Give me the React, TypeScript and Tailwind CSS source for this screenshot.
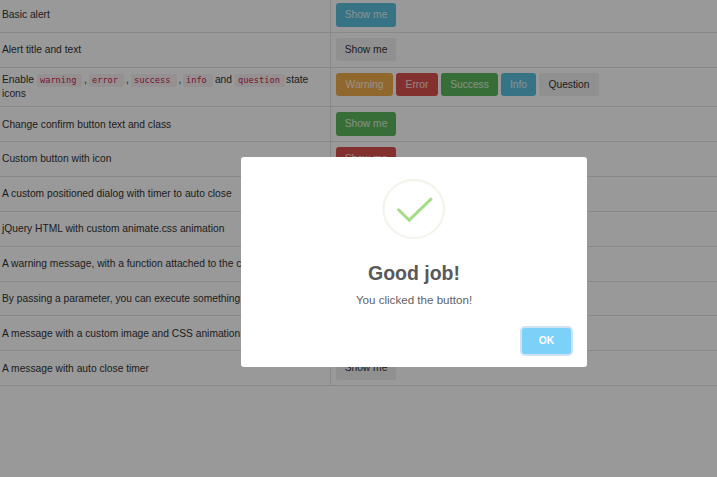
import type { ReactNode } from 'react';
import clsx from 'clsx';

const variants = {
  default: 'bg-[#f0f0f0] text-[#333]',
  info: 'bg-[#5bc0de] text-white/80',
  warning: 'bg-[#f0ad4e] text-white/80',
  danger: 'bg-[#d9534f] text-white/80',
  success: 'bg-[#5cb85c] text-white/80',
};

type ButtonProps = { variant?: keyof typeof variants; className?: string; children: ReactNode };

function Button({ variant = 'default', className = 'w-[60px]', children }: ButtonProps) {
  return (
    <button className={clsx('h-[23.5px] shrink-0 rounded-[3px] pt-[0.5px] text-center', variants[variant], className)}>
      {children}
    </button>
  );
}

function Code({ className, children }: { className: string; children: ReactNode }) {
  return (
    <code
      className={clsx(
        'inline-block h-[13px] rounded-[2px] bg-[#f9f2f4] pl-[3px] font-["DejaVu_Sans_Mono",monospace] text-[8.7px] leading-[13px] text-[#c7254e]',
        className,
      )}
    >
      {children}
    </code>
  );
}

type RowProps = { label: ReactNode; height?: string; children: ReactNode };

function Row({ label, height = 'h-[34.9px]', children }: RowProps) {
  return (
    <div className={clsx('flex border-b border-[#e4e4e4]', height)}>
      <div className="flex w-[331px] shrink-0 items-center border-r border-[#e4e4e4] pt-px pl-[2px] whitespace-nowrap">
        {label}
      </div>
      <div className="flex items-start gap-[3px] pt-[5px] pl-[5px]">{children}</div>
    </div>
  );
}

function SuccessIcon() {
  return (
    <svg className="h-[64px] w-[66px]" viewBox="0 0 66 64" fill="none">
      <ellipse cx="32.8" cy="32" rx="30.3" ry="29" stroke="#f3f5ed" strokeWidth="2.4" />
      <path d="M17.6 32.8 28.2 43.2 50 22.2" stroke="#a5dc86" strokeWidth="3" strokeLinecap="round" />
    </svg>
  );
}

function AlertModal() {
  return (
    <div className="relative flex h-[210px] w-[346px] flex-col items-center rounded-[3px] bg-white pt-[20px]">
      <SuccessIcon />
      <h2 className="mt-[19px] text-[19.5px] leading-[26px] font-bold text-[#595959]">Good job!</h2>
      <p className="mt-[6px] text-[11.6px] leading-[16px] text-[#616161]">You clicked the button!</p>
      <button className="mt-[20px] mr-[16px] h-[26px] w-[49px] self-end rounded-[3px] bg-[#7cd1f9] text-[10.3px] font-bold text-white ring-2 ring-[#cfe2ef]">
        OK
      </button>
    </div>
  );
}

export default function App() {
  return (
    <div className='relative h-[477px] w-[717px] overflow-hidden bg-white font-["Liberation_Sans",Arial,sans-serif] text-[10.25px] leading-[14px] text-[#333]'>
      <div className="-mt-[2px]">
        <Row label="Basic alert">
          <Button variant="info">Show me</Button>
        </Row>
        <Row label="Alert title and text">
          <Button>Show me</Button>
        </Row>
        <Row
          height="h-[39.3px]"
          label={
            <div>
              <div className="flex items-center">
                Enable
                <Code className="ml-[3px] w-[45px]">warning</Code>
                <span className="w-[7px] text-center">,</span>
                <Code className="w-[35px]">error</Code>
                <span className="w-[7px] text-center">,</span>
                <Code className="w-[46px]">success</Code>
                <span className="w-[6px] text-center">,</span>
                <Code className="mr-[2px] w-[30px]">info</Code>
                and
                <Code className="mr-[1px] ml-[3px] w-[50px]">question</Code>
                state
              </div>
              icons
            </div>
          }
        >
          <Button variant="warning" className="w-[57px]">Warning</Button>
          <Button variant="danger" className="w-[42px]">Error</Button>
          <Button variant="success" className="w-[57px]">Success</Button>
          <Button variant="info" className="w-[35px]">Info</Button>
          <Button>Question</Button>
        </Row>
        <Row label="Change confirm button text and class">
          <Button variant="success">Show me</Button>
        </Row>
        <Row label="Custom button with icon">
          <Button variant="danger">Show me</Button>
        </Row>
        <Row label="A custom positioned dialog with timer to auto close">
          <Button>Show me</Button>
        </Row>
        <Row label="jQuery HTML with custom animate.css animation">
          <Button>Show me</Button>
        </Row>
        <Row label="A warning message, with a function attached to the confirm button">
          <Button>Show me</Button>
        </Row>
        <Row label="By passing a parameter, you can execute something else">
          <Button>Show me</Button>
        </Row>
        <Row label="A message with a custom image and CSS animation">
          <Button>Show me</Button>
        </Row>
        <Row label="A message with auto close timer">
          <Button>Show me</Button>
        </Row>
      </div>

      {/* Backdrop + dialog */}
      <div className="absolute inset-0 bg-black/40 pt-[157px] pl-[241px]">
        <AlertModal />
      </div>
    </div>
  );
}
